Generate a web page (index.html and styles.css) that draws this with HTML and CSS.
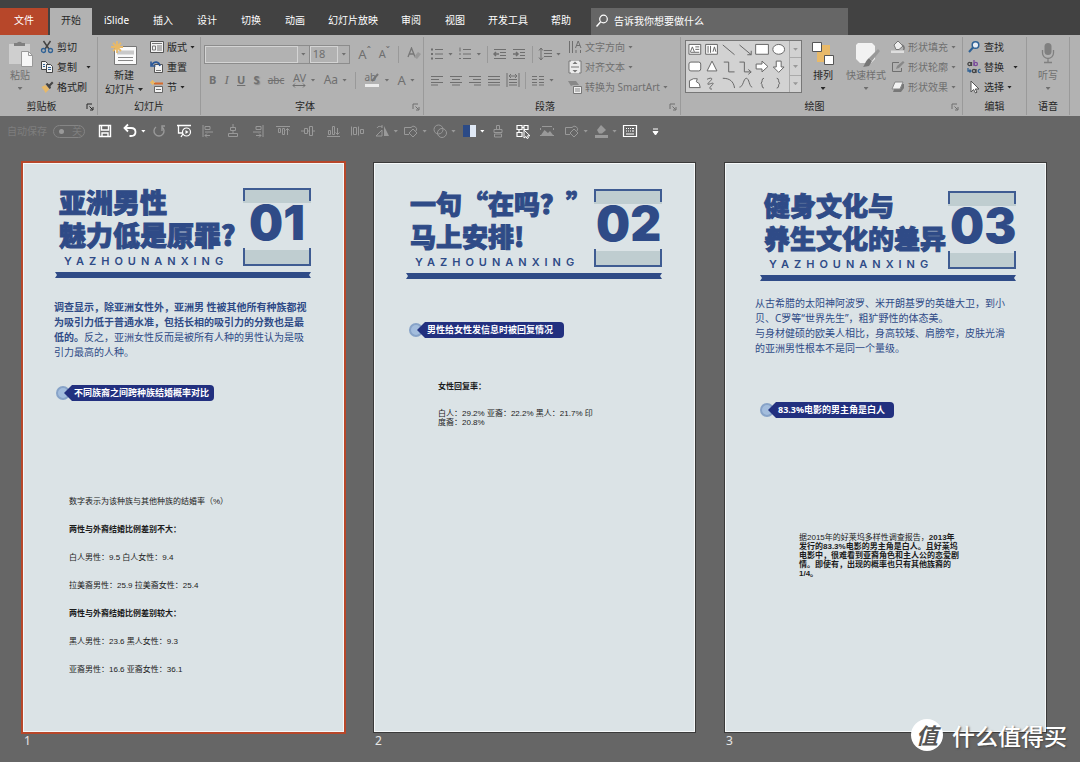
FILE: index.html
```html
<!DOCTYPE html>
<html lang="zh-CN">
<head>
<meta charset="utf-8">
<meta name="viewport" content="width=device-width, initial-scale=1">
<title>演示文稿</title>
<link rel="stylesheet" href="styles.css">
</head>
<body>
<svg class="defs" aria-hidden="true">
  <symbol id="launch" viewBox="0 0 8 8"><path d="M1 6V1h5M3.500 3.500l3 3M7 4v3H4" fill="none" stroke="currentColor"/></symbol>
  <symbol id="cut" viewBox="0 0 14 14"><path d="M3.500 1l5.500 8M10.500 1L5 9" stroke="#444" stroke-width="1.500" fill="none"/><g fill="none" stroke="#2f6296" stroke-width="1.300"><circle cx="3.500" cy="10.500" r="2"/><circle cx="10.500" cy="10.500" r="2"/></g></symbol>
  <symbol id="copy" viewBox="0 0 14 14"><g fill="#f2f2f2" stroke="#444"><path d="M1.500 1.500h4l2 2v6h-6z"/><path d="M6.500 4.500h4l2 2v6h-6z"/></g><path d="M3 4.500h2M3 6.500h2M8 7.500h3M8 9.500h3" stroke="#2f6296"/></symbol>
  <symbol id="brush" viewBox="0 0 14 14"><path d="M1.500 7l4-2 4 4-4 4-1-2z" fill="#e8b968"/><path d="M5.500 4l2-1 1.500 1.500L12 1.500l1.500 1.500-3 3L11 8 9.500 9z" fill="#444"/></symbol>
  <symbol id="layout" viewBox="0 0 14 14"><path d="M.5 1.500h13v11H.5z" fill="#f2f2f2" stroke="#555"/><path d="M2 3.500h10M2.500 6h3v4h-3zM7 6h5M7 8h5M7 10h5" fill="none" stroke="#777"/></symbol>
  <symbol id="reset" viewBox="0 0 14 14"><path d="M4.500 4.500h8v8h-8z" fill="#f2f2f2" stroke="#555"/><path d="M6 10.500h5" stroke="#777"/><path d="M2 5c2-4 7-4 8 1M1 1.500V6h4.500" fill="none" stroke="#2b5797" stroke-width="1.600"/></symbol>
  <symbol id="section" viewBox="0 0 14 14"><path d="M4 3.500h9" stroke="#d66a2c" stroke-width="2"/><path d="M4.500 6.500h8v6h-8z" fill="#f2f2f2" stroke="#666"/><path d="M6 9.500h5" stroke="#777"/><path d="M2.500 0v5M0 2.500h5M1 1l3 3M4 1L1 4" stroke="#e8b968"/></symbol>
  <symbol id="bullets" viewBox="0 0 14 14"><path d="M1 2.500h2M1 7h2M1 11.500h2" stroke="currentColor" stroke-width="2"/><path d="M5 2.500h8M5 7h8M5 11.500h8" stroke="currentColor"/></symbol>
  <symbol id="numbers" viewBox="0 0 14 14"><path d="M2 .5v4M1 7h2M1 11.500h2M5 2.500h8M5 7h8M5 11.500h8" stroke="currentColor"/></symbol>
  <symbol id="outdent" viewBox="0 0 14 14"><path d="M1 2.500h12M7 5.500h6M7 8.500h6M1 11.500h12" stroke="currentColor"/><path d="M6 7H1m2-2L1 7l2 2" fill="none" stroke="currentColor" stroke-width="1.500"/></symbol>
  <symbol id="indent" viewBox="0 0 14 14"><path d="M1 2.500h12M8 5.500h5M8 8.500h5M1 11.500h12" stroke="currentColor"/><path d="M1 7h5M4 5l2 2-2 2" fill="none" stroke="currentColor" stroke-width="1.500"/></symbol>
  <symbol id="spacing" viewBox="0 0 14 14"><path d="M6 3.500h8M6 6.500h8M6 9.500h8" stroke="currentColor"/><path d="M3 1v12M1 3.500L3 1l2 2.500M1 10.500L3 13l2-2.500" fill="none" stroke="currentColor"/></symbol>
  <symbol id="al" viewBox="0 0 14 14"><path d="M1 3.500h12M1 6.500h8M1 9.500h12M1 12h7" stroke="currentColor"/></symbol>
  <symbol id="ac" viewBox="0 0 14 14"><path d="M1 3.500h12M3 6.500h8M1 9.500h12M3 12h8" stroke="currentColor"/></symbol>
  <symbol id="ar" viewBox="0 0 14 14"><path d="M1 3.500h12M5 6.500h8M1 9.500h12M6 12h7" stroke="currentColor"/></symbol>
  <symbol id="aj" viewBox="0 0 14 14"><path d="M1 3.500h12M1 6.500h12M1 9.500h12M1 12h12" stroke="currentColor"/></symbol>
  <symbol id="ad" viewBox="0 0 14 14"><path d="M1 0v14M13 0v14M3 6.500h8M3 9.500h8M3 12h8M3 3h8M5 1L3 3l2 2M9 1l2 2-2 2" fill="none" stroke="currentColor"/></symbol>
  <symbol id="cols" viewBox="0 0 14 14"><path d="M1 3.500h5M1 6.500h5M1 9.500h5M1 12h5M8 3.500h5M8 6.500h5M8 9.500h5M8 12h5" stroke="currentColor"/></symbol>
  <symbol id="dir" viewBox="0 0 14 14"><path d="M1.500 1v12M4.500 1v12M8 13v-3M12.500 13v-3M7.500 8l2.700-7L13 8M8.500 5.500h3.500" fill="none" stroke="currentColor"/></symbol>
  <symbol id="valign" viewBox="0 0 14 14"><path d="M1 1h12v12H1z" fill="#ececec"/><path d="M3 1H1v12h2M11 1h2v12h-2" fill="none" stroke="#777"/><path d="M3 7h8" stroke="#777"/><path d="M7 1.500L4.500 4h5zM7 12.500L4.500 10h5z" fill="#777"/></symbol>
  <symbol id="smart" viewBox="0 0 14 14"><path d="M0 1h8l3 4H5L3 6z" fill="#888"/><path d="M5.500 6.500h8v7h-8z" fill="#eee" stroke="#777"/><path d="M7 9h5M7 11h5" stroke="#888"/></symbol>
  <symbol id="fill" viewBox="0 0 14 14"><path d="M3 5l4-4 5 5-4 3.500H5z" fill="#eee" stroke="#777"/><path d="M11 5c2 1 2.500 3 1.500 5" fill="none" stroke="#777" stroke-width="1.500"/><path d="M0 10.500h13V13H0z" fill="#dedede"/></symbol>
  <symbol id="outline" viewBox="0 0 14 14"><path d="M8 2.500H1.500v9h9V8" fill="none" stroke="currentColor"/><path d="M5 9l1-3 6-5 1.500 1.500L8 8z" fill="#888"/></symbol>
  <symbol id="effect" viewBox="0 0 14 14"><path d="M5 4h8v4l-3 4H2z" fill="#777"/><path d="M4 2h8L9 9H1z" fill="#f2f2f2" stroke="#888"/></symbol>
  <symbol id="find" viewBox="0 0 14 14"><circle cx="8.500" cy="5" r="3.300" fill="#e8eef6" stroke="#2f6296" stroke-width="1.500"/><path d="M6 7.500L2 12" stroke="#2f6296" stroke-width="2"/></symbol>
  <symbol id="select" viewBox="0 0 14 14"><path d="M4 1v11l2.600-2.500L8.500 13l1.500-.8-1.700-3.200H12z" fill="#fff" stroke="#555"/></symbol>
  <symbol id="hl" viewBox="0 0 16 16"><path d="M1 12h14v3H1z" fill="#ececec"/><path d="M8 9l6-7" stroke="#777" stroke-width="2"/></symbol>
  <symbol id="av-arrow" viewBox="0 0 14 5"><path d="M1 2.500h12M3 .5l-2 2 2 2M11 .5l2 2-2 2" fill="none" stroke="currentColor"/></symbol>
  <symbol id="q-save" viewBox="0 0 16 16"><path d="M2.500 2.500h11v11h-11zM4.500 2.500v4.500h7V2.500M5 13.500v-3.500h6v3.500" fill="none" stroke="#fff" stroke-width="1.400"/></symbol>
  <symbol id="q-undo" viewBox="0 0 16 16"><path d="M6 1.500L2.500 5 6 8.500M3 5h6c6 0 6 8 0 8H7.500" fill="none" stroke="#fff" stroke-width="1.800"/></symbol>
  <symbol id="q-redo" viewBox="0 0 16 16"><path d="M5 4a5 5 0 1 0 6 0M11 8V3h3" fill="none" stroke="currentColor" stroke-width="1.400"/></symbol>
  <symbol id="q-show" viewBox="0 0 16 16"><path d="M1 2.500h14M2.500 3v7h4M5 14l2.500-4" fill="none" stroke="#fff" stroke-width="1.300"/><circle cx="10.500" cy="9" r="4" fill="#666" stroke="#fff" stroke-width="1.200"/><path d="M9.500 7l3 2-3 2z" fill="#fff"/></symbol>
  <symbol id="q-left" viewBox="0 0 16 16"><path d="M3 2v12M5 3.500h5v3H5zM5 9h8M5 12.500h5M7 10.500l-2 2 2 2" fill="none" stroke="currentColor"/></symbol>
  <symbol id="q-center" viewBox="0 0 16 16"><path d="M8 1v3M8 8v2M5.500 4.500h5v3h-5zM3.500 10.500h9v3h-9z" fill="none" stroke="currentColor"/></symbol>
  <symbol id="q-right" viewBox="0 0 16 16"><path d="M13 2v12M6 3.500h5v3H6zM3 9h8M6 12.500h5M9 10.500l2 2-2 2" fill="none" stroke="currentColor"/></symbol>
  <symbol id="q-top" viewBox="0 0 16 16"><path d="M1 3.500h14M3.500 5.500h2v4h-2zM7.500 5.500h2v6h-2zM12.500 12V5.500M10.500 7.500l2-2 2 2" fill="none" stroke="currentColor"/></symbol>
  <symbol id="q-mid" viewBox="0 0 16 16"><path d="M1 8h3M8 8h2M13 8h2M4.500 5.500h3v5h-3zM9.500 3.500h3v9h-3z" fill="none" stroke="currentColor"/></symbol>
  <symbol id="q-bot" viewBox="0 0 16 16"><path d="M2 13.500h13M3.500 11.500v-4h2v4zM7.500 11.500v-8h2v8zM12.500 5v6.500M10.500 9.500l2 2 2-2" fill="none" stroke="currentColor"/></symbol>
  <symbol id="q-dist" viewBox="0 0 16 16"><path d="M2.500 3.500v9M4.500 4.500h3v7h-3zM11.500 6.500h3v4h-3zM9.500 3.500v9" fill="none" stroke="currentColor"/></symbol>
  <symbol id="q-rot" viewBox="0 0 16 16"><path d="M10 3v10h5z" fill="currentColor"/><path d="M8 7v6H2zM3 5c1-2 3-2 5-1M8 2v3" fill="none" stroke="currentColor"/></symbol>
  <symbol id="q-shape" viewBox="0 0 16 16"><path d="M6 11.500H1.500v-7H8M10 6l4 4-4 4-4-4zM8 4.500a3 3 0 1 1 5 3.500" fill="none" stroke="currentColor"/></symbol>
  <symbol id="q-merge" viewBox="0 0 16 16"><g fill="none" stroke="currentColor"><circle cx="6.500" cy="6.500" r="4.500"/><circle cx="10" cy="10" r="4.500"/></g></symbol>
  <symbol id="q-theme" viewBox="0 0 16 16"><path d="M2 2h7v12H2z" fill="#2b4a86"/><path d="M9 2h6v12H9z" fill="#dfe8f5"/></symbol>
  <symbol id="q-stamp" viewBox="0 0 16 16"><path d="M6.500 2.500h3v4h-3zM4 6.500h8v3H4zM4.500 11h7v3h-7z" fill="none" stroke="currentColor"/></symbol>
  <symbol id="q-pane" viewBox="0 0 16 16"><path d="M2 2.500h5v4H2zM2 9.500h5v4H2zM9 2.500h4v4H9zM7 4.500h2M4 7v3" fill="none" stroke="#fff" stroke-width="1.200"/><path d="M9 7v8l2-1.500 1 2 1.500-.7-1-2H15z" fill="#666" stroke="#fff"/></symbol>
  <symbol id="q-pic" viewBox="0 0 16 16"><path d="M3 3.500h10M1 12.500h14M1.500 5v2M14.500 5v2" fill="none" stroke="currentColor"/><path d="M2 12l3.500-5L9 10l2-2 3 4z" fill="currentColor"/></symbol>
  <symbol id="q-fill" viewBox="0 0 16 16"><path d="M2 12h13v3H2z" fill="currentColor"/><path d="M4 7l4-5 5 5-4 3.500H6z" fill="currentColor"/></symbol>
  <symbol id="q-kb" viewBox="0 0 16 16"><path d="M1.500 2.500h13v11h-13z" fill="none" stroke="#fff" stroke-width="1.200"/><path d="M4 5.500h1M6 5.500h1M8 5.500h1M10 5.500h2M4 8h1M6 8h1M8 8h1M10 8h2M4 11h8" stroke="#fff"/></symbol>
</svg>

<header class="app-bar">
  <nav class="tabs" aria-label="功能区选项卡">
    <button class="tab tab-file">文件</button>
    <button class="tab tab-active">开始</button>
    <button class="tab">iSlide</button>
    <button class="tab">插入</button>
    <button class="tab">设计</button>
    <button class="tab">切换</button>
    <button class="tab">动画</button>
    <button class="tab tab-long">幻灯片放映</button>
    <button class="tab">审阅</button>
    <button class="tab">视图</button>
    <button class="tab tab-long">开发工具</button>
    <button class="tab">帮助</button>
  </nav>
  <label class="tell-me">
    <svg class="ic14" viewBox="0 0 14 14" aria-hidden="true"><circle cx="8.500" cy="5" r="3.800" fill="none" stroke="#fff" stroke-width="1.200"/><path d="M5.500 8L1.500 12.500" stroke="#fff" stroke-width="1.400"/></svg>
    <input type="text" placeholder="告诉我你想要做什么" aria-label="告诉我你想要做什么">
  </label>
</header>

<section class="ribbon" aria-label="开始">
  <div class="group">
    <div class="body">
      <button class="big off w36">
        <svg class="ic28" viewBox="0 0 28 28" aria-hidden="true"><path d="M3 4h21v20H3z" fill="#cfcfcf"/><path d="M8 6V3h3a3 3 0 0 1 5 0h3v3z" fill="#808080"/><path d="M15.500 11.500h7l4 4v11h-11z" fill="#f6f6f6" stroke="#999"/><path d="M22.500 11.500v4h4" fill="none" stroke="#999"/></svg>
        <span>粘贴</span><i class="caret"></i>
      </button>
      <div class="stack">
        <button class="row"><svg class="ic14"><use href="#cut"/></svg>剪切</button>
        <button class="row"><svg class="ic14"><use href="#copy"/></svg>复制<i class="caret far"></i></button>
        <button class="row"><svg class="ic14"><use href="#brush"/></svg>格式刷</button>
      </div>
    </div>
    <h2>剪贴板</h2><button class="launcher" aria-label="剪贴板选项"><svg class="ic8"><use href="#launch"/></svg></button>
  </div>

  <div class="group">
    <div class="body">
      <button class="big w48">
        <svg class="ic28" viewBox="0 0 28 28" aria-hidden="true"><path d="M4.500 6.500h22v18h-22z" fill="#fafafa" stroke="#777"/><path d="M7 10.500h17v4H7z" fill="#c9c9c9"/><path d="M8 17.500h15M8 20.500h15" stroke="#888"/><path d="M7 1v12M1 7h12M3 3l8 8M11 3l-8 8" stroke="#e8b968" stroke-width="1.800"/></svg>
        <span>新建</span><span>幻灯片<i class="caret"></i></span>
      </button>
      <div class="stack">
        <button class="row"><svg class="ic14"><use href="#layout"/></svg>版式<i class="caret"></i></button>
        <button class="row"><svg class="ic14"><use href="#reset"/></svg>重置</button>
        <button class="row"><svg class="ic14"><use href="#section"/></svg>节<i class="caret"></i></button>
      </div>
    </div>
    <h2>幻灯片</h2>
  </div>

  <div class="group off">
    <div class="body lines">
      <div class="line fields">
        <label class="combo"><select aria-label="字体"><option></option></select><i class="caret"></i></label>
        <label class="combo size"><select aria-label="字号"><option>18</option></select><i class="caret"></i></label>
        <button class="glyph grow">A<sup>ˆ</sup></button>
        <button class="glyph shrink">A<sup>ˇ</sup></button>
        <i class="sep"></i>
        <button class="glyph" aria-label="清除格式"><svg class="ic14" viewBox="0 0 14 14"><path d="M1 10L4.500 1 8 10M2.500 7h4" fill="none" stroke="#777" stroke-width="1.300"/><path d="M7 10l4-5 3 2-4 5z" fill="#999"/></svg></button>
      </div>
      <div class="line spread">
        <button class="glyph"><b>B</b></button>
        <button class="glyph serif"><i>I</i></button>
        <button class="glyph"><b><u>U</u></b></button>
        <button class="glyph shade"><b>S</b></button>
        <button class="glyph small"><s>abc</s></button>
        <button class="glyph"><span class="av">AV<svg><use href="#av-arrow"/></svg></span><i class="caret"></i></button>
        <button class="glyph aa">Aa<i class="caret"></i></button>
        <i class="sep"></i>
        <button class="glyph mark"><span>ab</span><svg class="ic16"><use href="#hl"/></svg><i class="caret"></i></button>
        <button class="glyph big-a">A<i class="caret"></i></button>
      </div>
    </div>
    <h2>字体</h2><button class="launcher" aria-label="字体选项"><svg class="ic8"><use href="#launch"/></svg></button>
  </div>

  <div class="group off">
    <div class="body">
      <div class="lines para">
        <div class="line spread">
          <button class="glyph" aria-label="项目符号"><svg class="ic14"><use href="#bullets"/></svg><i class="caret"></i></button>
          <button class="glyph" aria-label="编号"><svg class="ic14"><use href="#numbers"/></svg><i class="caret"></i></button>
          <i class="sep"></i>
          <button class="glyph" aria-label="减少缩进"><svg class="ic14"><use href="#outdent"/></svg></button>
          <button class="glyph" aria-label="增加缩进"><svg class="ic14"><use href="#indent"/></svg></button>
          <i class="sep"></i>
          <button class="glyph" aria-label="行距"><svg class="ic14"><use href="#spacing"/></svg><i class="caret"></i></button>
        </div>
        <div class="line aligns">
          <button class="glyph" aria-label="左对齐"><svg class="ic14"><use href="#al"/></svg></button>
          <button class="glyph" aria-label="居中"><svg class="ic14"><use href="#ac"/></svg></button>
          <button class="glyph" aria-label="右对齐"><svg class="ic14"><use href="#ar"/></svg></button>
          <button class="glyph" aria-label="两端对齐"><svg class="ic14"><use href="#aj"/></svg></button>
          <button class="glyph" aria-label="分散对齐"><svg class="ic14"><use href="#ad"/></svg></button>
          <i class="sep"></i>
          <button class="glyph" aria-label="分栏"><svg class="ic14"><use href="#cols"/></svg><i class="caret"></i></button>
        </div>
      </div>
      <div class="stack wide">
        <button class="row"><svg class="ic14"><use href="#dir"/></svg>文字方向<i class="caret"></i></button>
        <button class="row"><svg class="ic14"><use href="#valign"/></svg>对齐文本<i class="caret"></i></button>
        <button class="row"><svg class="ic14"><use href="#smart"/></svg>转换为 SmartArt<i class="caret"></i></button>
      </div>
    </div>
    <h2>段落</h2><button class="launcher" aria-label="段落选项"><svg class="ic8"><use href="#launch"/></svg></button>
  </div>

  <div class="group">
    <div class="body draw">
      <div class="gallery">
        <svg class="shapes" viewBox="0 0 104 52" role="img" aria-label="形状"><g fill="none" stroke="#666">
          <g fill="#fff"><path d="M2.500 3.500h12v10h-12zM19.500 3.500h12v10h-12zM70.500 3.500h13v10h-13z"/><ellipse cx="94" cy="8.500" rx="6" ry="5"/><rect x="2.500" y="21.500" width="12" height="9" rx="2"/><path d="M26 20.500l5 10H21zM71 23.500h6v-3l6 5.500-6 5.500v-3h-6zM91.500 20.500h5v6h3L94 32l-5.500-5.500h3zM3 47.500v-7l4-2h4l-1 3 3 2 1 4z"/></g>
          <path d="M4 11l2-5 2 5M9 6h4M9 8.500h4M4 11.500h9M22 5v7M24.500 5v7M27 11l1.500-5 1.500 5M37 4l12 10M54 4l12 10M66 10v4h-4M38 21.500h5v10h6M54 21.500h5v10h6M63 29l3 2.500-3 2.500M21 39c4-2 6-1 4 1s-5 5-2 4 6-2 3 1-3 4 0 4M37 38c7 0 11 3 12 10M54 47c4 0 4-9 7-9s3 9 6 9M79 38c-3 0-1 4-3 5 2 1 0 5 3 5M92 38c3 0 1 4 3 5-2 1 0 5-3 5"/>
        </g></svg>
        <div class="scroll">
          <button aria-label="上一行"><i class="caret"></i></button><button aria-label="下一行"><i class="caret"></i></button><button aria-label="其他形状"><i class="caret"></i></button>
        </div>
      </div>
      <button class="big w36">
        <svg class="ic28" viewBox="0 0 28 28" aria-hidden="true"><path d="M8 5h13v10H8zM8 13h13v9H8z" fill="#e8b968"/><path d="M3.500 2.500h9v9h-9zM15.500 15.500h9v9h-9z" fill="#fff" stroke="#555"/></svg>
        <span>排列</span><i class="caret"></i>
      </button>
      <button class="big off w44">
        <svg class="ic28" viewBox="0 0 28 28" aria-hidden="true"><path d="M6 3h14l3 3v13l-4 4H8l-4-4V5z" fill="#f2f2f2"/><path d="M26 9l2 2-8 10-3-3z" fill="#999"/><path d="M17 18l3 3-3 5-6 1c2-2 2-6 6-9z" fill="#777"/></svg>
        <span>快速样式</span><i class="caret"></i>
      </button>
      <div class="stack off">
        <button class="row"><svg class="ic14"><use href="#fill"/></svg>形状填充<i class="caret"></i></button>
        <button class="row"><svg class="ic14"><use href="#outline"/></svg>形状轮廓<i class="caret"></i></button>
        <button class="row"><svg class="ic14"><use href="#effect"/></svg>形状效果<i class="caret"></i></button>
      </div>
    </div>
    <h2>绘图</h2><button class="launcher off" aria-label="绘图选项"><svg class="ic8"><use href="#launch"/></svg></button>
  </div>

  <div class="group">
    <div class="body">
      <div class="stack">
        <button class="row"><svg class="ic14"><use href="#find"/></svg>查找</button>
        <button class="row"><svg class="ic14" viewBox="0 0 14 14"><g fill="none" stroke-width="1.300"><g stroke="#444"><circle cx="2.500" cy="4" r="1.600"/><path d="M4.500 2v4"/></g><g stroke="#7a4a9c"><path d="M7 0v6"/><circle cx="8.800" cy="4" r="1.600"/></g><g stroke="#444"><circle cx="7" cy="11" r="1.600"/><path d="M9 9v4"/></g><path d="M13.500 9.500c-3-1-3 4 0 3M1 8v3h3M2.500 9.500L4 11l-1.500 1.500" stroke="#2f6296"/></g></svg>替换<i class="caret far"></i></button>
        <button class="row"><svg class="ic14"><use href="#select"/></svg>选择<i class="caret"></i></button>
      </div>
    </div>
    <h2>编辑</h2>
  </div>

  <div class="group">
    <div class="body mic">
      <button class="big off w36">
        <svg class="ic28" viewBox="0 0 28 28" aria-hidden="true"><rect x="10.500" y="3" width="7" height="12" rx="3.500" fill="#808080"/><path d="M8.500 10v3a5.500 5.500 0 0 0 11 0v-3M14 18.500V22M10 22.500h8" fill="none" stroke="#808080" stroke-width="1.300"/></svg>
        <span>听写</span><i class="caret"></i>
      </button>
    </div>
    <h2>语音</h2>
  </div>
</section>

<div class="quick" role="toolbar" aria-label="快速访问工具栏">
  <label class="autosave">自动保存<input type="checkbox" disabled><span class="switch">关</span></label>
  <div class="quick-items">
    <button class="q" aria-label="保存"><svg class="ic16"><use href="#q-save"/></svg></button>
    <button class="q lit" aria-label="撤消"><svg class="ic16"><use href="#q-undo"/></svg><i class="caret"></i></button>
    <button class="q" aria-label="恢复"><svg class="ic16"><use href="#q-redo"/></svg></button>
    <button class="q" aria-label="放映"><svg class="ic16"><use href="#q-show"/></svg></button>
    <button class="q" aria-label="左对齐对象"><svg class="ic16"><use href="#q-left"/></svg></button>
    <button class="q" aria-label="水平居中"><svg class="ic16"><use href="#q-center"/></svg></button>
    <button class="q" aria-label="右对齐对象"><svg class="ic16"><use href="#q-right"/></svg></button>
    <button class="q" aria-label="顶端对齐"><svg class="ic16"><use href="#q-top"/></svg></button>
    <button class="q" aria-label="垂直居中"><svg class="ic16"><use href="#q-mid"/></svg></button>
    <button class="q" aria-label="底端对齐"><svg class="ic16"><use href="#q-bot"/></svg></button>
    <button class="q" aria-label="横向分布"><svg class="ic16"><use href="#q-dist"/></svg></button>
    <button class="q" aria-label="旋转"><svg class="ic16"><use href="#q-rot"/></svg><i class="caret"></i></button>
    <button class="q" aria-label="形状"><svg class="ic16"><use href="#q-shape"/></svg><i class="caret"></i></button>
    <button class="q" aria-label="合并形状"><svg class="ic16"><use href="#q-merge"/></svg><i class="caret"></i></button>
    <button class="q lit" aria-label="主题颜色"><svg class="ic16"><use href="#q-theme"/></svg><i class="caret"></i></button>
    <button class="q" aria-label="格式"><svg class="ic16"><use href="#q-stamp"/></svg></button>
    <button class="q" aria-label="选择窗格"><svg class="ic16"><use href="#q-pane"/></svg></button>
    <button class="q" aria-label="图片"><svg class="ic16"><use href="#q-pic"/></svg></button>
    <button class="q" aria-label="更改形状"><svg class="ic16"><use href="#q-shape"/></svg><i class="caret"></i></button>
    <button class="q" aria-label="填充"><svg class="ic16"><use href="#q-fill"/></svg><i class="caret"></i></button>
    <button class="q" aria-label="键盘"><svg class="ic16"><use href="#q-kb"/></svg></button>
    <button class="q" aria-label="自定义工具栏"><svg class="ic16" viewBox="0 0 16 16"><path d="M6 6h5M6 8.500h5L8.500 12z" fill="#fff" stroke="#fff"/></svg></button>
  </div>
</div>

<main class="sorter">
  <figure>
    <article class="slide selected">
      <div class="heading">
        <div class="titles"><h1>亚洲男性<br>魅力低是原罪?</h1><p class="pinyin">YAZHOUNANXING</p></div>
        <div class="number"><span>01</span></div>
        <svg class="rule" viewBox="0 0 256 6" preserveAspectRatio="none" aria-hidden="true"><path d="M0 0h256l-2 3 2 3H0l2-3z" fill="#2f4b87"/></svg>
      </div>
      <p class="copy"><b>调查显示，除亚洲女性外，亚洲男 性被其他所有种族都视<br>为吸引力低于普通水准，包括长相的吸引力的分数也是最<br>低的。</b>反之，亚洲女性反而是被所有人种的男性认为是吸<br>引力最高的人种。</p>
      <h3 class="pill"><i class="dot"></i><span>不同族裔之间跨种族结婚概率对比</span></h3>
      <div class="data">
        <p>数字表示为该种族与其他种族的结婚率（%）</p>
        <p><b>两性与外裔结婚比例差别不大：</b></p>
        <p>白人男性：9.5 白人女性：9.4</p>
        <p>拉美裔男性：25.9 拉美裔女性：25.4</p>
        <p><b>两性与外裔结婚比例差别较大：</b></p>
        <p>黑人男性：23.6 黑人女性：9.3</p>
        <p>亚裔男性：16.6 亚裔女性：36.1</p>
      </div>
    </article>
    <figcaption>1</figcaption>
  </figure>

  <figure>
    <article class="slide second">
      <div class="heading">
        <div class="titles"><h1>一句“在吗？”<br>马上安排!</h1><p class="pinyin">YAZHOUNANXING</p></div>
        <div class="number"><span>02</span></div>
        <svg class="rule" viewBox="0 0 256 6" preserveAspectRatio="none" aria-hidden="true"><path d="M0 0h256l-2 3 2 3H0l2-3z" fill="#2f4b87"/></svg>
      </div>
      <h3 class="pill"><i class="dot"></i><span>男性给女性发信息时被回复情况</span></h3>
      <div class="note">
        <p><b>女性回复率：</b></p>
        <p>白人：29.2% 亚裔：22.2% 黑人：21.7% 印<br>度裔：20.8%</p>
      </div>
    </article>
    <figcaption>2</figcaption>
  </figure>

  <figure>
    <article class="slide third">
      <div class="heading">
        <div class="titles"><h1>健身文化与<br>养生文化的差异</h1><p class="pinyin">YAZHOUNANXING</p></div>
        <div class="number"><span>03</span></div>
        <svg class="rule" viewBox="0 0 256 6" preserveAspectRatio="none" aria-hidden="true"><path d="M0 0h256l-2 3 2 3H0l2-3z" fill="#2f4b87"/></svg>
      </div>
      <p class="copy">从古希腊的太阳神阿波罗、米开朗基罗的英雄大卫，到小<br>贝、C罗等“世界先生”，粗犷野性的体态美。<br>与身材健硕的欧美人相比，身高较矮、肩膀窄，皮肤光滑<br>的亚洲男性根本不是同一个量级。</p>
      <h3 class="pill"><i class="dot"></i><span>83.3%电影的男主角是白人</span></h3>
      <div class="note">
        <p>据2015年的好莱坞多样性调查报告，<b>2013年<br>发行的83.3%电影的男主角是白人。且好莱坞<br>电影中，很难看到亚裔角色和主人公的恋爱剧<br>情。即使有，出现的概率也只有其他族裔的<br>1/4。</b></p>
      </div>
    </article>
    <figcaption>3</figcaption>
  </figure>
</main>

<div class="watermark"><span class="seal">值</span><span>什么值得买</span></div>
</body>
</html>
```
FILE: styles.css
```css
* { box-sizing: border-box; }
body {
  margin: 0;
  min-height: 100vh;
  display: flex;
  flex-direction: column;
  position: relative;
  background: #666;
  color: #262626;
  font: 10px/14px "Noto Sans", "Noto Sans CJK SC", sans-serif;
}
h1, h2, h3, p, figure { margin: 0; }
button, input, select { font: inherit; color: inherit; background: none; border: 0; padding: 0; margin: 0; }
svg { display: block; flex: none; }
.defs { position: absolute; width: 0; height: 0; }
.ic8 { width: 8px; height: 8px; }
.ic14 { width: 14px; height: 14px; }
.ic16 { width: 16px; height: 16px; }
.ic28 { width: 28px; height: 28px; }
.caret {
  flex: none;
  display: inline-block;
  width: 5px;
  height: 3px;
  background: currentColor;
  clip-path: polygon(0 0, 100% 0, 50% 100%);
}

/* tab strip */
.app-bar { display: flex; background: #424242; padding-top: 8px; }
.tabs { display: flex; }
.tab { height: 27px; padding: 0 12px 3px; color: #fff; white-space: nowrap; }
.tab-file { background: #b7472a; padding: 0 14px 3px; margin-right: 2px; }
.tab-active { background: #b2b2b2; color: #262626; padding: 0 11px 3px; }
.tab-long { padding: 0 11px 3px; }
.tell-me { flex: 0 1 257px; display: flex; align-items: center; gap: 5px; margin-left: 8px; padding: 0 4px 2px; background: #666; color: #fff; }
.tell-me input { flex: 1; min-width: 0; outline: 0; }
.tell-me input::placeholder { color: #fff; opacity: 1; }

/* ribbon */
.ribbon {
  display: grid;
  grid-template-columns: 98fr 103fr 223fr 257fr 282fr 64fr 43fr 10fr;
  padding: 2px 0 1px;
  background: #b2b2b2;
}
.group { position: relative; min-width: 0; border-right: 1px solid #9a9a9a; }
.off { color: #6f6f6f; }
.group h2 { color: #262626; font-size: 10px; line-height: 18px; font-weight: 400; text-align: center; padding-right: 14px; }
.group:nth-child(n+6) h2, .group:nth-child(2) h2 { padding-right: 0; }
.launcher { position: absolute; right: 3px; bottom: 4px; }
.body { display: flex; height: 60px; padding: 0 2px; }
.big { display: flex; flex-direction: column; align-items: center; gap: 1px; padding-top: 3px; line-height: 13px; white-space: nowrap; }
.big > .caret { margin-top: 4px; }
.big span .caret { margin: 0 0 2px 3px; }
.w36 { width: 36px; }
.w44 { width: 44px; }
.w48 { width: 48px; }
.stack { display: grid; grid-template-rows: repeat(3, 20px); justify-items: start; padding-left: 2px; }
.wide { padding-left: 4px; }
.row { display: flex; align-items: center; gap: 3px; white-space: nowrap; }
.row .far { margin-left: 6px; }
.lines { display: flex; flex-direction: column; }
.line { display: flex; align-items: center; height: 34px; }
.line + .line { height: 18px; }
.spread { justify-content: space-between; padding: 0 6px; }
.fields { gap: 8px; padding-left: 1px; }
.sep { width: 1px; height: 17px; background: #999; }
.combo { display: flex; align-items: center; width: 110px; height: 19px; border: 1px solid #8c8c8c; padding-right: 3px; }
.combo select { flex: 1; min-width: 0; height: 17px; margin-right: 3px; border: 1px solid #d4d4d4; appearance: none; font-size: 11px; padding-left: 2px; }
.combo.size { width: 43px; margin-left: -9px; }
.glyph { display: flex; align-items: center; gap: 4px; font-size: 11px; }
.glyph sup { font-size: 10px; line-height: 8px; align-self: flex-start; margin-left: -4px; }
.grow { font-size: 13px; }
.serif { font-family: "Liberation Serif", serif; font-size: 13px; }
.shade { text-shadow: 1px 1px 1px #888; }
.small { font-size: 10px; }
.av { display: grid; justify-items: center; line-height: 11px; }
.av svg { width: 14px; height: 5px; }
.aa { font-size: 12px; }
.mark { position: relative; font-size: 10px; }
.mark span { position: absolute; left: 0; top: -2px; }
.big-a { font-size: 13px; }
.para { width: 138px; }
.para .spread { padding: 0 3px 0 4px; }
.aligns { gap: 5px; padding-left: 4px; }
.draw { gap: 3px; }
.draw .stack { padding: 0; }
.mic { justify-content: center; }
.gallery { display: flex; width: 117px; height: 53px; margin: 3px 0 0 2px; border: 1px solid #777; background: #d2d2d2; }
.shapes { flex: 1; min-width: 0; height: 51px; }
.scroll { display: grid; width: 12px; border-left: 1px solid #aaa; color: #999; }
.scroll button { display: grid; place-items: center; }
.scroll button + button { border-top: 1px solid #aaa; }

/* quick access bar */
.quick { display: flex; align-items: center; gap: 12px; height: 30px; padding-left: 7px; color: #999; }
.autosave { display: flex; align-items: center; gap: 6px; color: #7e7e7e; white-space: nowrap; }
.autosave input { position: absolute; opacity: 0; }
.switch { display: flex; align-items: center; gap: 8px; width: 32px; height: 13px; padding-left: 5px; border: 1px solid #858585; border-radius: 7px; }
.switch::before { content: ""; width: 5px; height: 5px; border-radius: 50%; background: #999; }
.quick-items { display: flex; justify-content: space-between; width: 566px; }
.q { display: flex; align-items: center; width: 16px; }
.q:has(.caret) { width: 20px; }
.q .caret { margin-left: 3px; }
.lit .caret { background: #fff; }

/* slide sorter */
.sorter { flex: 1; display: grid; grid-template-columns: repeat(3, minmax(0, 1fr)); gap: 30px; align-items: start; padding: 17px 34px 0 23px; }
figcaption { margin-top: 2px; padding-left: 1px; color: #e6e6e6; font-size: 12px; }
.slide { aspect-ratio: 321 / 569; padding: 24px 11px 0 30px; background: #dbe3e6; border: 1px solid #f5f8f9; outline: 1px solid #3a3a3a; color: #2f4b87; }
.selected { outline: 2px solid #b7472a; }
.heading { display: grid; grid-template-columns: minmax(0, 188px) 68px; row-gap: 4px; margin-left: 1px; }
.titles { display: flex; flex-direction: column; justify-content: space-between; height: 80px; }
.titles h1 { margin-top: -3px; padding-left: 4px; font: 900 26px/33px "Noto Sans CJK SC", sans-serif; -webkit-text-stroke: 1px #2f4b87; white-space: nowrap; text-spacing-trim: space-all; }
.selected h1 { font-size: 27px; }
.pinyin { padding-left: 9px; font: 600 11px/13px Inter, sans-serif; letter-spacing: 5px; }
.number { display: grid; justify-items: center; align-items: start; height: 78px; padding-top: 8px; font: 900 48px/50px Inter, "Open Sans", sans-serif; background: linear-gradient(#bfcdd0 13px, transparent 13px 60px, #bfcdd0 60px); border: 2px solid #3f5c92; border-image: linear-gradient(#3f5c92 13px, transparent 13px 60px, #3f5c92 60px) 2; }
.rule { grid-column: 1 / -1; width: 100%; height: 6px; }
.copy { margin-top: 22px; line-height: 15px; white-space: nowrap; }
.pill { display: flex; align-items: center; margin-top: 25px; font-size: 9px; line-height: 16px; color: #fff; white-space: nowrap; }
.dot { width: 14px; height: 14px; margin: 0 -6px 0 2px; border-radius: 50%; background: #a3bddd; border: 2px solid #87a3c8; }
.pill span { padding: 0 5px 0 10px; background: #22307f; border-radius: 4px; clip-path: polygon(0 50%, 8px 0, 100% 0, 100% 100%, 8px 100%); }
.data, .note { color: #1c1c1c; font: 8px/9px "Liberation Sans", "Noto Sans CJK SC", sans-serif; white-space: nowrap; }
.data { margin: 87px 0 0 15px; line-height: 28px; }
.second { padding-top: 25px; }
.second .pill { margin: 43px 0 0 2px; }
.second .pill span { padding: 0 11px 0 10px; }
.second .note { margin: 44px 0 0 33px; }
.second .note p + p { margin-top: 18px; }
.third { padding: 27px 7px 0 29px; }
.third .heading { margin-left: 5px; }
.third .copy { margin-top: 15px; }
.third .pill { margin: 46px 0 0 3px; }
.third .pill span { padding: 0 9px 0 10px; }
.third .note { margin: 115px 0 0 44px; }

/* site mark over the lower right corner */
.watermark { position: absolute; right: 13px; bottom: 11px; display: flex; align-items: center; gap: 9px; color: #fff; font: 500 23px/32px "Noto Sans CJK SC", sans-serif; text-shadow: 1px 1px 2px #444; }
.seal { width: 32px; height: 32px; border-radius: 50%; background: #fff; color: #555; font-size: 22px; line-height: 31px; font-style: italic; font-weight: 700; text-align: center; text-shadow: none; }
```
